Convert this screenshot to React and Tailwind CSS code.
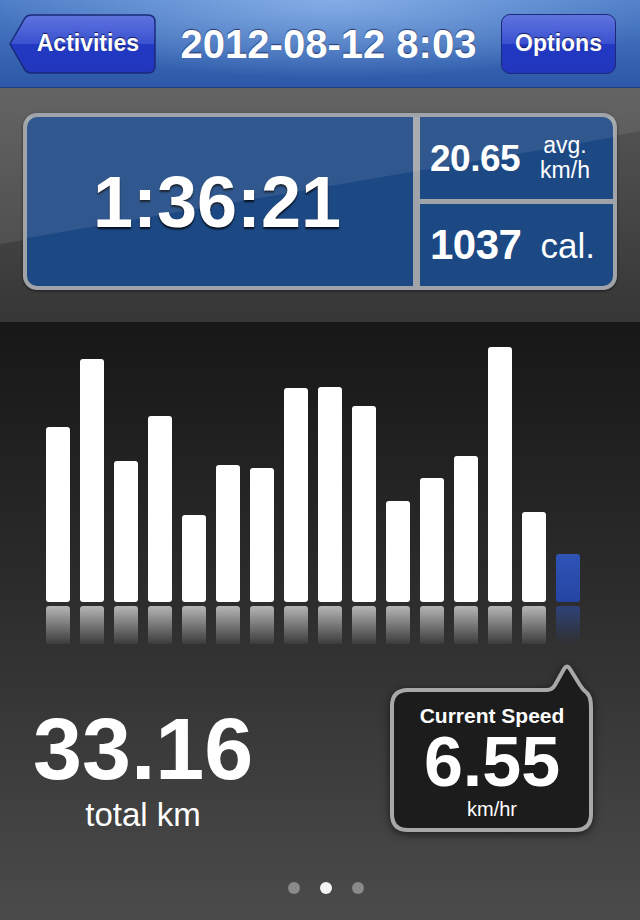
import React from 'react';

const bars = [175, 243, 141, 186, 87, 137, 134, 214, 215, 196, 101, 124, 146, 255, 90, 48];

const font = { fontFamily: '"Liberation Sans", Arial, sans-serif' };

const BackButton = () => (
  <div className="relative w-[148px] h-[60px] flex items-center justify-end pr-[17px]">
    <svg className="absolute inset-0" width="148" height="60" viewBox="0 0 148 60">
      <defs>
        <linearGradient id="btnA" x1="0" y1="0" x2="0" y2="1">
          <stop offset="0" stopColor="#5f74de" />
          <stop offset="0.5" stopColor="#3a51d0" />
          <stop offset="0.5" stopColor="#2239c4" />
          <stop offset="1" stopColor="#2136bb" />
        </linearGradient>
      </defs>
      <path
        d="M2 30 L17 4 Q19 1 24 1 H140 Q147 1 147 8 V52 Q147 59 140 59 H24 Q19 59 17 56 Z"
        fill="url(#btnA)"
        stroke="#1a2a78"
        strokeWidth="1.5"
      />
    </svg>
    <span className="relative text-white font-bold text-[23px] [text-shadow:0_-1px_1px_rgba(0,0,40,0.7)]">Activities</span>
  </div>
);

const OptionsButton = () => (
  <div className="w-[115px] h-[60px] rounded-[9px] border-[1.5px] border-[#1a2a78] flex items-center justify-center bg-[linear-gradient(#5f74de,#3a51d0_50%,#2239c4_50%,#2136bb)]">
    <span className="text-white font-bold text-[23px] [text-shadow:0_-1px_1px_rgba(0,0,40,0.7)]">Options</span>
  </div>
);

const Bubble = () => (
  <div className="relative w-[206px] h-[170px] flex flex-col items-center pt-[42px] text-white">
    <svg className="absolute inset-0 drop-shadow-[0_2px_4px_rgba(0,0,0,0.6)]" width="206" height="170" viewBox="0 0 206 170">
      <path
        d="M19 27 H158 Q163 27 166 22 L175 6 Q178 1 181 6 L191 22 Q194 27 198 30 Q202 34 202 44 V151 Q202 167 186 167 H19 Q3 167 3 151 V43 Q3 27 19 27 Z"
        fill="#1c1c1d"
        stroke="#a8a8a8"
        strokeWidth="4"
      />
    </svg>
    <span className="relative font-bold text-[21px] leading-none">Current Speed</span>
    <span className="relative font-bold text-[70px] leading-none mt-[1px]">6.55</span>
    <span className="relative text-[20px] leading-none mt-[2px]">km/hr</span>
  </div>
);

export default function App() {
  return (
    <div className="w-[640px] h-[920px] flex flex-col overflow-hidden" style={font}>
      {/* Header */}
      <header className="h-[88px] shrink-0 flex items-center pl-[8px] pr-[24px] border-b border-[#1c3f80] bg-[radial-gradient(ellipse_55%_90%_at_52%_0%,rgba(150,190,240,0.75),transparent_100%),linear-gradient(#4c7cc6,#2c58a7)]">
        <BackButton />
        <h1 className="flex-1 text-center text-white font-bold text-[40px] leading-none [text-shadow:0_-1px_1px_rgba(0,0,50,0.6)]">
          2012-08-12 8:03
        </h1>
        <OptionsButton />
      </header>

      {/* Summary panel */}
      <section className="h-[234px] shrink-0 px-[23px] pt-[25px] bg-[linear-gradient(170deg,rgba(255,255,255,0.08)_0_45%,transparent_45%),linear-gradient(#575757,#363636)]">
        <div className="relative h-[177px] rounded-[14px] bg-[#a0a4a9] p-[4px] flex gap-[7px] shadow-[0_1px_3px_rgba(0,0,0,0.5)]">
          <div className="w-[386px] rounded-l-[10px] bg-[#1c4884] flex items-center justify-center pr-[6px]">
            <span className="text-white font-bold text-[72px] leading-none [text-shadow:0_2px_2px_rgba(0,0,0,0.8)]">
              1:36:21
            </span>
          </div>
          <div className="flex-1 flex flex-col gap-[5px]">
            <div className="h-[82px] rounded-tr-[10px] bg-[#1c4884] flex items-center pl-[10px] text-white">
              <span className="font-bold text-[37px] leading-none tracking-[-0.5px]">20.65</span>
              <span className="ml-[20px] flex flex-col items-center text-[23px] leading-[25px]">
                <span>avg.</span>
                <span>km/h</span>
              </span>
            </div>
            <div className="flex-1 rounded-br-[10px] bg-[#1c4884] flex items-center pl-[10px] text-white">
              <span className="font-bold text-[42px] leading-none tracking-[-0.5px]">1037</span>
              <span className="ml-[19px] text-[35px] leading-none">cal.</span>
            </div>
          </div>
          <svg
            className="absolute left-[4px] top-[4px] pointer-events-none"
            width="588"
            height="169"
            viewBox="0 0 588 169"
            preserveAspectRatio="none"
          >
            <polygon points="0,0 588,0 588,20 0,121" fill="rgba(255,255,255,0.09)" />
          </svg>
        </div>
      </section>

      {/* Chart and totals */}
      <section className="flex-1 flex flex-col bg-[linear-gradient(#171717,#2c2c2c_45%,#4b4b4b)]">
        <div className="h-[280px] flex items-end gap-[10px] pl-[46px]">
          {bars.map((h, i) => (
            <div
              key={i}
              className={`w-[24px] rounded-[3px] ${
                i === bars.length - 1 ? 'bg-[linear-gradient(#2f54b6,#2545a3)]' : 'bg-white'
              }`}
              style={{ height: h }}
            />
          ))}
        </div>
        <div className="h-[38px] mt-[4px] flex gap-[10px] pl-[46px]">
          {bars.map((h, i) => (
            <div
              key={i}
              className={`w-[24px] rounded-t-[3px] ${
                i === bars.length - 1
                  ? 'bg-[linear-gradient(rgba(45,80,170,0.6),transparent)]'
                  : 'bg-[linear-gradient(rgba(255,255,255,0.65),rgba(255,255,255,0.05))]'
              }`}
            />
          ))}
        </div>

        <div className="flex items-start">
          <div className="pl-[33px] pt-[61px] flex flex-col items-center text-white">
            <span className="font-bold text-[88px] leading-none">33.16</span>
            <span className="text-[33px] leading-none mt-[5px]">total km</span>
          </div>
          <div className="ml-auto mr-[45px] mt-[19px]">
            <Bubble />
          </div>
        </div>

        <div className="flex justify-center gap-[20px] mt-[49px] pl-[12px]">
          <span className="w-[12px] h-[12px] rounded-full bg-[#8a8a8a]" />
          <span className="w-[12px] h-[12px] rounded-full bg-[#f4f4f4]" />
          <span className="w-[12px] h-[12px] rounded-full bg-[#8a8a8a]" />
        </div>
      </section>
    </div>
  );
}
